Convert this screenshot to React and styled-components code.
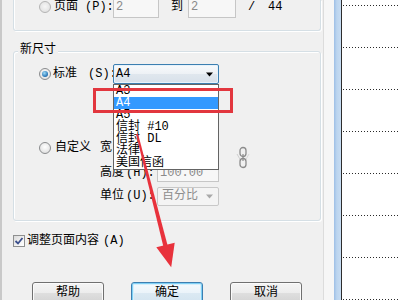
import React from "react";
import styled, { createGlobalStyle } from "styled-components";

const FONT = `"Liberation Mono", "Noto Sans CJK SC", monospace`;

const Global = createGlobalStyle`
  html, body { margin: 0; padding: 0; background: #f0f0f0; overflow: hidden; }
  #root { width: 400px; height: 300px; }
  *, *::before, *::after { box-sizing: border-box; }
`;

const Screen = styled.div`
  position: relative;
  display: flex;
  width: 400px;
  height: 300px;
  overflow: hidden;
  font-family: ${FONT};
  font-size: 12px;
  color: #000;
`;

const Dialog = styled.div`
  flex: none;
  width: 323px;
  border-left: 2px solid #c9c9c9;
  background: #f0f0f0;
  display: flex;
  flex-direction: column;
  align-items: flex-start;
`;

const TopGroup = styled.div`
  flex: none;
  margin-left: 11px;
  width: 308px;
  height: 31px;
  border: 1px solid #d5dfe5;
  border-top: none;
  border-radius: 0 0 3px 3px;
  box-shadow: 1px 1px 0 #fff, inset 1px 0 0 #fff;
  display: flex;
  align-items: flex-start;
  padding-left: 25px;
`;

const SizeGroup = styled.div`
  flex: none;
  margin: 20px 0 0 11px;
  width: 308px;
  height: 170px;
  border: 1px solid #d5dfe5;
  border-radius: 3px;
  box-shadow: 1px 1px 0 #fff, inset 1px 1px 0 #fff;
  display: flex;
  flex-direction: column;
  align-items: flex-start;
`;

const GroupTitle = styled.div`
  margin: -9px 0 0 4px;
  padding: 0 2px;
  height: 14px;
  line-height: 14px;
  background: #f0f0f0;
`;

const Row = styled.div`
  display: flex;
  align-items: center;
  flex: none;
  height: ${(p) => p.$h || 20}px;
  margin-top: ${(p) => p.$mt || 0}px;
  margin-left: ${(p) => p.$ml || 0}px;
`;

const Label = styled.span`
  flex: none;
  display: inline-block;
  white-space: nowrap;
  line-height: 14px;
  width: ${(p) => (p.$w ? `${p.$w}px` : "auto")};
  margin-left: ${(p) => p.$ml || 0}px;
  color: ${(p) => (p.$muted ? "#7a7a7a" : "#000")};
`;

const Radio = styled.span`
  flex: none;
  width: 12px;
  height: 12px;
  border-radius: 50%;
  border: 1px solid ${(p) => (p.$disabled ? "#b4b4b4" : "#8a8c8e")};
  background: ${(p) =>
    p.$disabled
      ? "radial-gradient(circle at 50% 45%, #f6f6f6, #e2e2e2 75%)"
      : "radial-gradient(circle at 50% 40%, #ffffff, #e4e4e4 70%, #cfcfcf)"};
  display: flex;
  align-items: center;
  justify-content: center;
  &::after {
    content: "";
    display: ${(p) => (p.$checked ? "block" : "none")};
    width: 6px;
    height: 6px;
    border-radius: 50%;
    background: radial-gradient(circle at 40% 35%, #9fdcf7, #2a78b8 65%, #133f6b);
  }
`;

const TextBox = styled.div`
  flex: none;
  width: ${(p) => p.$w}px;
  height: ${(p) => p.$h || 20}px;
  line-height: ${(p) => (p.$h || 20) - 2}px;
  border: 1px solid #c6c6c6;
  background: #f7f7f7;
  color: #8a8a8a;
  padding-left: 2px;
  white-space: nowrap;
  overflow: hidden;
`;

const ComboWrap = styled.div`
  position: relative;
  z-index: 3;
  flex: none;
  width: ${(p) => p.$w}px;
  height: ${(p) => p.$h || 20}px;
`;

const Combo = styled.div`
  width: 100%;
  height: 100%;
  display: flex;
  align-items: center;
  justify-content: space-between;
  padding: 0 4px 0 ${(p) => (p.$disabled ? 4 : 2)}px;
  border: 1px solid ${(p) => (p.$disabled ? "#c8c8c8" : "#3c7fb1")};
  border-radius: 2px;
  color: ${(p) => (p.$disabled ? "#8d8d8d" : "#000")};
  background: ${(p) =>
    p.$disabled
      ? "#f4f4f4"
      : "linear-gradient(#f8fafc, #edf1f5 50%, #e0e7ee 50%, #d8e1ea)"};
  box-shadow: ${(p) => (p.$disabled ? "none" : "inset 0 0 0 1px #e6f2fb")};
  line-height: 14px;
  white-space: nowrap;
`;

const DropList = styled.ul`
  position: absolute;
  top: 100%;
  left: 0;
  width: 106px;
  margin: 0;
  padding: 0;
  list-style: none;
  background: #fff;
  border: 1px solid #646464;
  overflow: hidden;
`;

const DropItem = styled.li`
  height: 12px;
  line-height: 12px;
  padding-left: 2px;
  white-space: nowrap;
  background: ${(p) => (p.$active ? "#3399ff" : "transparent")};
  color: ${(p) => (p.$active ? "#fff" : "#000")};
`;

const CustomBlock = styled.div`
  flex: none;
  display: flex;
  align-items: flex-start;
  margin: 54px 0 0 25px;
`;

const FieldCol = styled.div`
  display: flex;
  flex-direction: column;
`;

const Spacer = styled.span`
  flex: none;
  width: ${(p) => p.$w}px;
`;

const ChainIcon = styled.svg`
  flex: none;
  margin: 8px 0 0 17px;
`;

const CheckBox = styled.span`
  flex: none;
  width: 12px;
  height: 12px;
  border: 1px solid #8e8f8f;
  background: linear-gradient(135deg, #dadada, #f7f7f7 70%, #ffffff);
  display: flex;
  align-items: center;
  justify-content: center;
`;

const ButtonRow = styled.div`
  flex: none;
  display: flex;
  gap: 27px;
  margin-top: 34px;
  padding-left: 30px;
`;

const Button = styled.div`
  flex: none;
  width: 72px;
  height: 23px;
  border-radius: 3px;
  border: 1px solid ${(p) => (p.$default ? "#3c7fb1" : "#707070")};
  background: ${(p) =>
    p.$default
      ? "linear-gradient(#f5fafd, #eaf3f9 50%, #dbe9f3 50%, #d2e3ef)"
      : "linear-gradient(#f4f4f4, #ececec 50%, #dedede 50%, #d2d2d2)"};
  box-shadow: ${(p) =>
    p.$default ? "inset 0 0 0 1px #7fd0f5, inset 0 0 0 2px #d6effb" : "inset 0 0 0 1px #fbfbfb"};
  display: flex;
  align-items: center;
  justify-content: center;
  line-height: 14px;
  padding-bottom: 2px;
`;

const SideStrip = styled.div`
  flex: none;
  width: 11px;
  border-left: 1px solid #dcdcdc;
  background: #f6f6f6;
`;

const BlueEdge = styled.div`
  flex: none;
  width: 7px;
  background: linear-gradient(to right, #9ebfe6, #bcd5ef 40%, #c7dcf2);
`;

const Preview = styled.div`
  flex: 1;
  border-left: 1px solid #2d2d2d;
  background: #fff;
  display: flex;
  flex-direction: column;
  gap: 41px;
  padding-top: 5px;
`;

const DotLine = styled.div`
  flex: none;
  height: 1px;
  margin-left: 1px;
  background: repeating-linear-gradient(90deg, #2a2a2a 0 1px, transparent 1px 3px);
`;

const Overlay = styled.svg`
  position: absolute;
  left: 0;
  top: 0;
  z-index: 10;
  pointer-events: none;
`;

const Arrow = ({ color }) => (
  <svg width="8" height="5" viewBox="0 0 8 5">
    <path d="M0 0.5 H7 L3.5 4.5 Z" fill={color} />
  </svg>
);

const paperSizes = ["A3", "A4", "A5", "信封 #10", "信封 DL", "法律", "美国信函"];

export default function App() {
  return (
    <>
      <Global />
      <Screen>
        <Dialog>
          <TopGroup>
            <Row $h={22} style={{ marginTop: -4 }}>
              <Radio $disabled />
              <Label $ml={3} $w={31}>页面</Label>
              <Label $w={28}>(P):</Label>
              <TextBox $w={46} $h={21}>2</TextBox>
              <Label $ml={12} $w={17}>到</Label>
              <TextBox $w={48} $h={21}>2</TextBox>
              <Label $ml={12} $w={20}>/</Label>
              <Label>44</Label>
            </Row>
          </TopGroup>

          <SizeGroup>
            <GroupTitle>新尺寸</GroupTitle>
            <Row $mt={7} $ml={25}>
              <Radio $checked />
              <Label $ml={2} $w={35}>标准</Label>
              <Label $w={25}>(S):</Label>
              <ComboWrap $w={106}>
                <Combo>
                  <span>A4</span>
                  <Arrow color="#000" />
                </Combo>
                <DropList>
                  {paperSizes.map((s) => (
                    <DropItem key={s} $active={s === "A4"}>
                      {s}
                    </DropItem>
                  ))}
                </DropList>
              </ComboWrap>
            </Row>

            <CustomBlock>
              <FieldCol>
                <Row>
                  <Radio />
                  <Label $ml={4} $w={45}>自定义</Label>
                  <Label $w={26}>宽</Label>
                  <Label $w={31}>(W):</Label>
                  <TextBox $w={62} $h={18}>100.00</TextBox>
                </Row>
                <Row $mt={5}>
                  <Spacer $w={61} />
                  <Label $w={26}>高度</Label>
                  <Label $w={31}>(H):</Label>
                  <TextBox $w={62} $h={18}>100.00</TextBox>
                </Row>
              </FieldCol>
              <ChainIcon width="14" height="24" viewBox="0 0 14 24">
                <path d="M1 8 L5 15" stroke="#cfcfcf" strokeWidth="1" fill="none" />
                <path d="M13 8 L9 15" stroke="#d8d8d8" strokeWidth="1" fill="none" />
                <rect x="4" y="1.5" width="6" height="9" rx="3" stroke="#8c8c8c" strokeWidth="1.3" fill="none" />
                <rect x="4" y="12.5" width="6" height="9" rx="3" stroke="#8c8c8c" strokeWidth="1.3" fill="none" />
                <path d="M7 8 V15" stroke="#8c8c8c" strokeWidth="1.2" />
              </ChainIcon>
            </CustomBlock>

            <Row $mt={3} $ml={86}>
              <Label $w={26}>单位</Label>
              <Label $w={31}>(U):</Label>
              <ComboWrap $w={62} $h={19}>
                <Combo $disabled>
                  <span>百分比</span>
                  <Arrow color="#a9a9a9" />
                </Combo>
              </ComboWrap>
            </Row>
          </SizeGroup>

          <Row $h={14} $mt={13} $ml={11}>
            <CheckBox>
              <svg width="10" height="10" viewBox="0 0 10 10">
                <path d="M1.5 5 L4 7.5 L8.5 2" stroke="#3b4f8c" strokeWidth="1.8" fill="none" />
              </svg>
            </CheckBox>
            <Label $ml={2}>调整页面内容</Label>
            <Label $ml={4}>(A)</Label>
          </Row>

          <ButtonRow>
            <Button>帮助</Button>
            <Button $default>确定</Button>
            <Button>取消</Button>
          </ButtonRow>
        </Dialog>

        <SideStrip />
        <BlueEdge />
        <Preview>
          {Array.from({ length: 8 }).map((_, i) => (
            <DotLine key={i} />
          ))}
        </Preview>

        <Overlay width="400" height="300" viewBox="0 0 400 300">
          <rect x="94.5" y="89.5" width="137" height="22" fill="none" stroke="#e2363e" strokeWidth="3" />
          <polygon
            points="137.97,133.75 167.63,245.46 163.37,246.54 136.03,134.25"
            fill="#e8323c"
          />
          <polygon points="174.7,242.66 171.2,267.3 156.3,247.34" fill="#e8323c" />
        </Overlay>
      </Screen>
    </>
  );
}
